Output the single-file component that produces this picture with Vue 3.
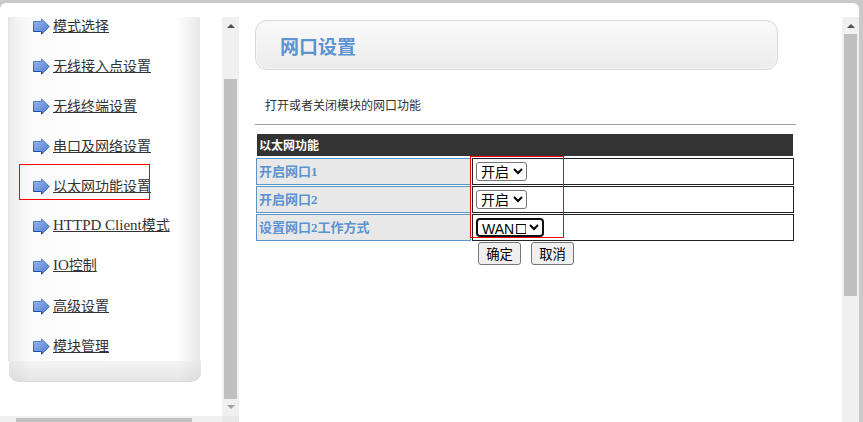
<script setup>
const menu = [
  { text: '模式选择' },
  { text: '无线接入点设置' },
  { text: '无线终端设置' },
  { text: '串口及网络设置' },
  { text: '以太网功能设置' },
  { latin: 'HTTPD Client', text: '模式' },
  { latin: 'IO', text: '控制' },
  { text: '高级设置' },
  { text: '模块管理' },
]
const rows = [
  { label: '开启网口1', value: '开启', options: ['开启', '关闭'] },
  { label: '开启网口2', value: '开启', options: ['开启', '关闭'] },
  { label: '设置网口2工作方式', value: 'WAN口', options: ['WAN口', 'LAN口'], focus: true },
]
</script>

<template>
  <div class="window">
    <div class="frame">
      <aside class="side">
        <div class="side-view">
          <div class="side-scroll">
            <ul class="menu">
              <li v-for="m in menu" :key="m.text">
                <svg class="arrow" width="17" height="17" viewBox="0 0 17 17">
                  <defs>
                    <linearGradient id="ag" x1="0" y1="0" x2="1" y2="1">
                      <stop offset="0" stop-color="#9db8ea" />
                      <stop offset="1" stop-color="#4f7ccc" />
                    </linearGradient>
                    <linearGradient id="as" x1="0" y1="0" x2="0" y2="1">
                      <stop offset="0" stop-color="#5f8ad6" />
                      <stop offset="1" stop-color="#123f9e" />
                    </linearGradient>
                  </defs>
                  <path d="M0.5 3.5H8.5V0.8L16.2 8.5L8.5 16.2V13.5H0.5Z" fill="url(#ag)" stroke="url(#as)" stroke-width="1" />
                </svg>
                <a class="link"><span v-if="m.latin" class="latin">{{ m.latin }}</span>{{ m.text }}</a>
              </li>
            </ul>
            <div class="side-foot"></div>
          </div>
          <div class="hbar"><div class="hthumb"></div></div>
        </div>
        <div class="vbar">
          <span class="up"></span>
          <div class="vtrack side-track"><div class="vthumb"></div></div>
          <span class="down"></span>
          <div class="corner"></div>
        </div>
        <div class="redbox menu-red"></div>
      </aside>

      <main class="content">
        <div class="title"><h1>网口设置</h1></div>
        <p class="desc">打开或者关闭模块的网口功能</p>
        <div class="rule"></div>
        <div class="formwrap">
          <div class="head">以太网功能</div>
          <div v-for="r in rows" :key="r.label" class="row">
            <div class="lab">{{ r.label }}</div>
            <div class="val">
              <select class="sel" :class="{ focus: r.focus }" :value="r.value">
                <option v-for="o in r.options" :key="o">{{ o }}</option>
              </select>
            </div>
          </div>
          <div class="actions">
            <button class="btn">确定</button>
            <button class="btn">取消</button>
          </div>
          <div class="redbox form-red"></div>
        </div>
      </main>

      <div class="vbar page-bar">
        <span class="up"></span>
        <div class="vtrack page-track"><div class="vthumb"></div></div>
      </div>
    </div>
  </div>
</template>

<style>
html, body { margin: 0; padding: 0; overflow: hidden; background: #c8c8c8; }
</style>

<style scoped>
.window {
  width: 863px; height: 422px; box-sizing: border-box; padding: 3px 4px 0 0; overflow: hidden;
  background-color: #c9c9c9;
  background-image: radial-gradient(#bdbdbd 0.6px, transparent 0.7px);
  background-size: 2px 2px;
  font-family: "Liberation Serif", "Noto Sans CJK SC", serif;
}
.frame {
  height: 419px; display: flex; background: #fff; border-radius: 6px 6px 0 0;
  padding-top: 14px; box-sizing: border-box;
}
.side { width: 239px; flex: none; display: flex; position: relative; }
.side-view { width: 222px; flex: none; display: flex; flex-direction: column; }
.side-scroll { flex: 1; min-height: 0; padding-left: 8px; overflow: hidden; }
.menu {
  list-style: none; margin: -11px 0 0; padding: 0; width: 192px; height: 355px; box-sizing: border-box;
  background: linear-gradient(90deg, #e4e4e4 0, #eeeeee 3px, #fbfbfb 22px, #fff 50%, #fff 88%, #e7e7e7 100%);
}
.menu li { height: 40px; display: flex; align-items: center; padding-left: 25px; box-sizing: border-box; }
.arrow { flex: none; margin-right: 3px; }
.link { color: #333; font-size: 14px; line-height: 17px; padding-bottom: 2px; text-decoration: underline; white-space: nowrap; font-family: "Noto Sans CJK SC", sans-serif; }
.latin { font-size: 15px; font-family: "Liberation Serif", serif; }
.side-foot {
  width: 192px; height: 21px; margin-left: 1px; border-radius: 0 0 10px 10px; box-sizing: border-box;
  background: linear-gradient(90deg, rgba(0,0,0,.05), rgba(0,0,0,0) 12%, rgba(0,0,0,0) 88%, rgba(0,0,0,.05)), linear-gradient(#f4f4f4, #e6e6e6);
  border-bottom: 1px solid #dcdcdc;
}
.hbar { height: 6px; background: #f0f0f0; flex: none; padding-top: 2px; box-sizing: border-box; }
.hthumb { width: 176px; height: 4px; margin-left: 16px; background: #c0c0c0; }
.vbar { width: 17px; flex: none; background: #f0f0f0; display: flex; flex-direction: column; align-items: center; }
.up { flex: none; width: 0; height: 0; border-left: 4px solid transparent; border-right: 4px solid transparent; border-bottom: 4px solid #505050; margin-top: 7px; }
.down { flex: none; width: 0; height: 0; border-left: 4px solid transparent; border-right: 4px solid transparent; border-top: 4px solid #a3a3a3; margin: 6px 0 7px; }
.corner { flex: none; width: 17px; height: 6px; background: #e8e8e8; }
.vtrack { flex: 1; width: 13px; min-height: 0; box-sizing: border-box; display: flex; }
.vthumb { flex: 1; background: #c0c0c0; width: 13px; }
.side-track { padding-top: 51px; }
.page-track { padding-top: 6px; }
.page-track .vthumb { flex: none; height: 262px; }
.redbox { position: absolute; border: 1px solid #f00; box-sizing: border-box; pointer-events: none; }
.menu-red { left: 19px; top: 147px; width: 131px; height: 36px; }
.content { flex: 1; min-width: 0; padding-left: 16px; box-sizing: border-box; }
.title {
  width: 523px; height: 50px; margin-top: 3px; box-sizing: border-box; border: 1px solid #d8d8d8; border-radius: 12px;
  box-shadow: inset 0 0 0 1px #f6f6f6;
  background: linear-gradient(#fafafa, #ebebeb); padding-left: 24px; display: flex; align-items: center;
}
.title h1 { margin: 2px 0 0; font-size: 19px; line-height: 22px; color: #5c93d1; font-weight: bold; font-family: "Noto Sans CJK SC", sans-serif; }
.desc { margin: 0; padding: 27px 0 0 10px; font-size: 12px; line-height: 16px; color: #333; font-family: "Noto Sans CJK SC", sans-serif; }
.rule { height: 1px; background: #a0a0a0; margin-top: 11px; width: 541px; }
.formwrap { position: relative; width: 541px; margin-top: 9px; font-family: "Noto Sans CJK SC", sans-serif; }
.head {
  height: 22px; margin: 0 0 2px 2px; background: #333; color: #fff; font-size: 12px; font-weight: bold; line-height: 22px; padding-left: 2px;
  width: 536px; box-sizing: border-box;
}
.row { display: flex; height: 28px; align-items: flex-start; }
.lab {
  width: 215px; height: 27px; margin-left: 1px; box-sizing: border-box; border: 1px solid #5c93c9; background: #e8e8e8;
  color: #5c93d1; font-size: 13px; font-weight: bold; line-height: 25px; padding-left: 2px; font-family: "Liberation Serif", "Noto Sans CJK SC", serif;
}
.val {
  width: 322px; height: 27px; margin-left: 1px; box-sizing: border-box; border: 1px solid #222; display: flex; align-items: center; padding-left: 3px;
}
.sel {
  height: 19px; width: 51px; font-size: 14px; font-family: "Liberation Sans", "Noto Sans CJK SC", sans-serif; padding: 0 0 1px; box-sizing: border-box;
  background: #fff; border: 1px solid #767676; border-radius: 3px; color: #000; outline: none;
}
.sel.focus { width: 68px; border: 2px solid #101010; border-radius: 4px; }
.actions { display: flex; gap: 10px; padding: 0 0 0 223px; }
.btn {
  height: 23px; width: 43px; padding: 0; box-sizing: border-box; font-size: 13.33px; background: #efefef; border: 1px solid #767676; border-radius: 3px; color: #000;
  font-family: "Noto Sans CJK SC", sans-serif;
}
.form-red { left: 215px; top: 22px; width: 94px; height: 82px; }
</style>
